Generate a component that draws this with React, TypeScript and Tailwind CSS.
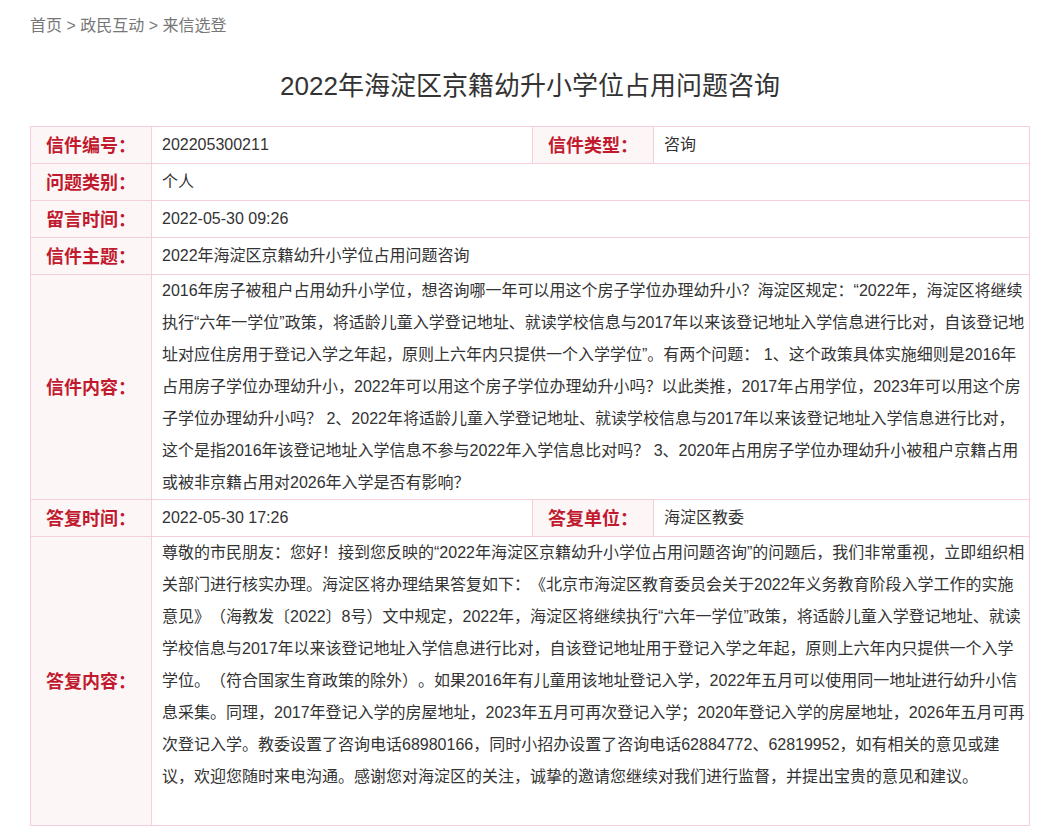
const labelCls =
  "border border-[#f5d0da] bg-[#fcf6f7] pt-[2px] text-center text-[18px] font-bold text-[#c11a2e]";
const valueCls = "border border-[#f5d0da] pl-[10px] pr-1 text-[16px] leading-8 text-[#333]";

const Row = ({ label, children }: { label: string; children: React.ReactNode }) => (
  <tr className="h-[37px]">
    <th className={labelCls}>{label}</th>
    <td colSpan={3} className={valueCls}>
      {children}
    </td>
  </tr>
);

export default function App() {
  return (
    <div className="bg-white min-h-[838px] pl-[30px] pt-[14px] font-['Liberation_Sans','Noto_Sans_CJK_SC',sans-serif] [font-kerning:none] [text-spacing-trim:space-all]">
      <div className="w-[1000px]">
        <div className="text-[16px] leading-6 text-[#777]">首页 &gt; 政民互动 &gt; 来信选登</div>
        <h1 className="mt-[28px] text-center text-[26px] font-normal leading-[40px] text-[#333]">
          2022年海淀区京籍幼升小学位占用问题咨询
        </h1>
        <table className="mt-5 w-[999px] table-fixed border-collapse">
          <colgroup>
            <col className="w-[121px]" />
            <col className="w-[381px]" />
            <col className="w-[121px]" />
            <col className="w-[376px]" />
          </colgroup>
          <tbody>
            <tr className="h-[37px]">
              <th className={labelCls}>信件编号：</th>
              <td className={valueCls}>202205300211</td>
              <th className={labelCls}>信件类型：</th>
              <td className={valueCls}>咨询</td>
            </tr>
            <Row label="问题类别：">个人</Row>
            <Row label="留言时间：">2022-05-30 09:26</Row>
            <Row label="信件主题：">2022年海淀区京籍幼升小学位占用问题咨询</Row>
            <Row label="信件内容：">
              2016年房子被租户占用幼升小学位，想咨询哪一年可以用这个房子学位办理幼升小？海淀区规定：“2022年，海淀区将继续执行“六年一学位”政策，将适龄儿童入学登记地址、就读学校信息与2017年以来该登记地址入学信息进行比对，自该登记地址对应住房用于登记入学之年起，原则上六年内只提供一个入学学位”。有两个问题：
              1、这个政策具体实施细则是2016年占用房子学位办理幼升小，2022年可以用这个房子学位办理幼升小吗？以此类推，2017年占用学位，2023年可以用这个房子学位办理幼升小吗？
              2、2022年将适龄儿童入学登记地址、就读学校信息与2017年以来该登记地址入学信息进行比对，这个是指2016年该登记地址入学信息不参与2022年入学信息比对吗？
              3、2020年占用房子学位办理幼升小被租户京籍占用或被非京籍占用对2026年入学是否有影响？
            </Row>
            <tr className="h-[37px]">
              <th className={labelCls}>答复时间：</th>
              <td className={valueCls}>2022-05-30 17:26</td>
              <th className={labelCls}>答复单位：</th>
              <td className={valueCls}>海淀区教委</td>
            </tr>
            <tr className="h-[289px]">
              <th className={labelCls}>答复内容：</th>
              <td colSpan={3} className={valueCls + " align-top"}>
                尊敬的市民朋友：您好！接到您反映的“2022年海淀区京籍幼升小学位占用问题咨询”的问题后，我们非常重视，立即组织相关部门进行核实办理。海淀区将办理结果答复如下：《北京市海淀区教育委员会关于2022年义务教育阶段入学工作的实施意见》（海教发〔2022〕8号）文中规定，2022年，海淀区将继续执行“六年一学位”政策，将适龄儿童入学登记地址、就读学校信息与2017年以来该登记地址入学信息进行比对，自该登记地址用于登记入学之年起，原则上六年内只提供一个入学学位。（符合国家生育政策的除外）。如果2016年有儿童用该地址登记入学，2022年五月可以使用同一地址进行幼升小信息采集。同理，2017年登记入学的房屋地址，2023年五月可再次登记入学；2020年登记入学的房屋地址，2026年五月可再次登记入学。教委设置了咨询电话68980166，同时小招办设置了咨询电话62884772、62819952，如有相关的意见或建议，欢迎您随时来电沟通。感谢您对海淀区的关注，诚挚的邀请您继续对我们进行监督，并提出宝贵的意见和建议。
              </td>
            </tr>
          </tbody>
        </table>
      </div>
    </div>
  );
}
